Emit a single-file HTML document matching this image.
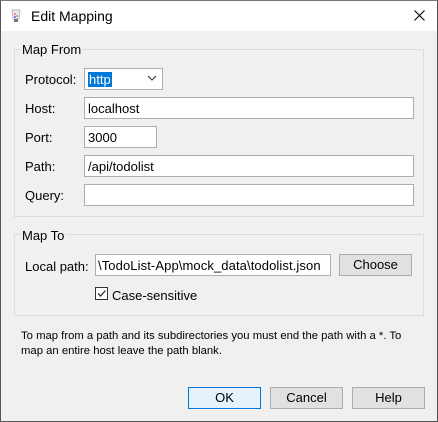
<!DOCTYPE html>
<html><head><style>
*{margin:0;padding:0;box-sizing:border-box}
body{width:438px;height:422px;background:#f0f0f0;font-family:"Liberation Sans",sans-serif;font-size:12px;color:#000;position:relative;overflow:hidden}
.a{position:absolute}
.frame{left:0;top:0;width:438px;height:422px;border:1px solid #555;border-top:1px solid #777}
.title{left:1px;top:1px;width:436px;height:30px;background:#fff}
.grp{border:1px solid #dcdcdc}
.lbl{background:#f0f0f0;padding:0 2px;font-size:13px}
.in{background:#fff;border:1px solid #adadad;padding-left:3px;line-height:21px;font-size:13px;white-space:nowrap;overflow:hidden}
.btn{background:#e1e1e1;border:1px solid #adadad;text-align:center;line-height:20px;font-size:13px}
.t{font-size:13px}
</style></head><body>
<div class="a frame"></div>
<div class="a title"></div>
<svg class="a" style="left:9px;top:8px" width="14" height="16" viewBox="0 0 14 16"><path d="M3 2h8l-1 9H4z" fill="#e8e8e8" stroke="#bbb"/><rect x="5" y="5" width="2" height="2" fill="#e88"/><rect x="7" y="7" width="2" height="2" fill="#8c8"/><rect x="5" y="8" width="2" height="2" fill="#88e"/><rect x="5" y="11" width="4" height="3" fill="#777"/></svg>
<div class="a" style="left:31px;top:8px;font-size:14px">Edit Mapping</div>
<svg class="a" style="left:414px;top:10px" width="11" height="11"><path d="M0.5 0.5l10 10M10.5 0.5l-10 10" stroke="#000" stroke-width="1.1"/></svg>

<div class="a grp" style="left:14px;top:49px;width:410px;height:168px"></div>
<div class="a lbl" style="left:20px;top:42px">Map From</div>
<div class="a t" style="left:25px;top:72px">Protocol:</div>
<div class="a in" style="left:84px;top:68px;width:79px;height:22px"><span style="background:#0078d7;color:#fff;padding:0 1px">http</span></div>
<svg class="a" style="left:147px;top:75px" width="10" height="7"><path d="M1 1l4 4 4-4" fill="none" stroke="#333"/></svg>
<div class="a t" style="left:25px;top:101px">Host:</div>
<div class="a in" style="left:84px;top:97px;width:330px;height:22px">localhost</div>
<div class="a t" style="left:25px;top:130px">Port:</div>
<div class="a in" style="left:84px;top:126px;width:73px;height:22px">3000</div>
<div class="a t" style="left:25px;top:159px">Path:</div>
<div class="a in" style="left:84px;top:155px;width:330px;height:22px">/api/todolist</div>
<div class="a t" style="left:25px;top:188px">Query:</div>
<div class="a in" style="left:84px;top:184px;width:330px;height:22px"></div>

<div class="a grp" style="left:14px;top:234px;width:410px;height:82px"></div>
<div class="a lbl" style="left:20px;top:228px">Map To</div>
<div class="a t" style="left:25px;top:259px">Local path:</div>
<div class="a in" style="left:95px;top:254px;width:236px;height:22px;padding-left:2px;letter-spacing:0.1px">\TodoList-App\mock_data\todolist.json</div>
<div class="a btn" style="left:339px;top:254px;width:73px;height:22px">Choose</div>
<div class="a" style="left:95px;top:287px;width:13px;height:13px;border:1px solid #333;background:#fff"></div>
<svg class="a" style="left:96px;top:288px" width="11" height="11"><path d="M2 5.5l2.5 2.5 5-5.5" fill="none" stroke="#333" stroke-width="1.3"/></svg>
<div class="a t" style="left:112px;top:288px">Case-sensitive</div>

<div class="a" style="left:21px;top:329px;font-size:11.3px;line-height:14.5px;width:415px">To map from a path and its subdirectories you must end the path with a *. To<br>map an entire host leave the path blank.</div>

<div class="a btn" style="left:188px;top:387px;width:73px;height:22px;background:#e5f1fb;border-color:#0078d7">OK</div>
<div class="a btn" style="left:270px;top:387px;width:73px;height:22px">Cancel</div>
<div class="a btn" style="left:352px;top:387px;width:73px;height:22px">Help</div>
</body></html>
